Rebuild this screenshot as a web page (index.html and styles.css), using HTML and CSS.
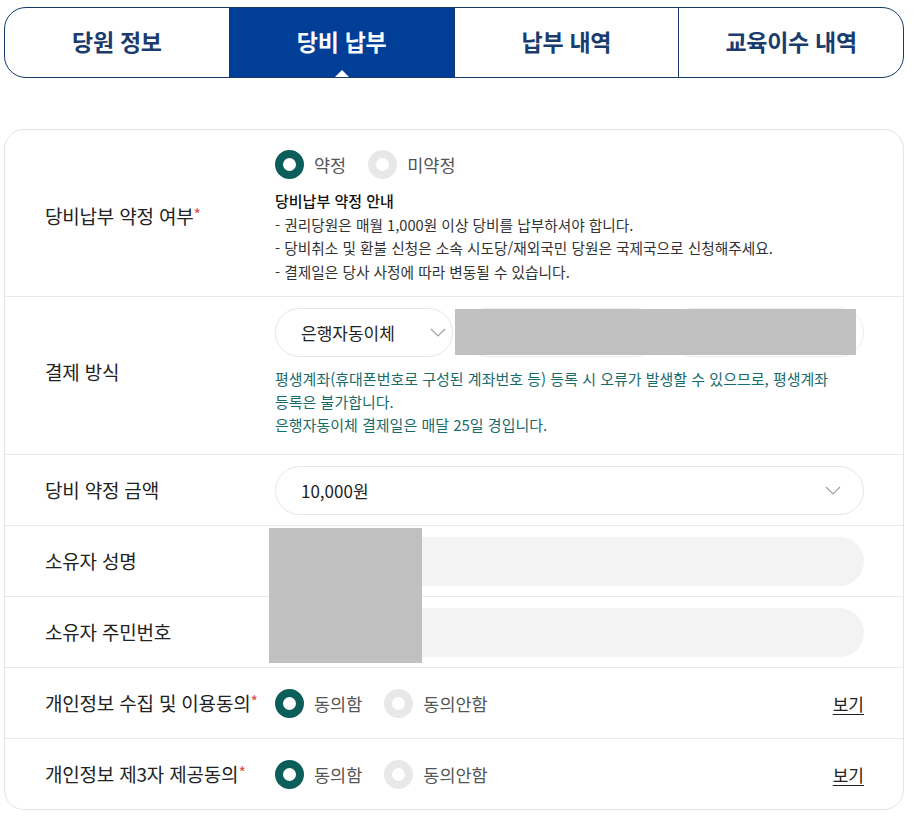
FILE: index.html
```html
<!DOCTYPE html>
<html lang="ko">
<head>
  <meta charset="UTF-8">
  <title>당비 납부</title>
  <link rel="stylesheet" href="styles.css">
</head>
<body>
  <ul class="tabs">
    <li class="tab">당원 정보</li>
    <li class="tab active">당비 납부</li>
    <li class="tab">납부 내역</li>
    <li class="tab">교육이수 내역</li>
  </ul>

  <div class="card">
    <div class="row row-agree">
      <div class="label">당비납부 약정 여부<span class="req">*</span></div>
      <div class="field">
        <div class="radios">
          <label class="radio on"><i></i>약정</label>
          <label class="radio"><i></i>미약정</label>
        </div>
        <div class="notice">
          <p class="notice-title">당비납부 약정 안내</p>
          <p>- 권리당원은 매월 1,000원 이상 당비를 납부하셔야 합니다.</p>
          <p>- 당비취소 및 환불 신청은 소속 시도당/재외국민 당원은 국제국으로 신청해주세요.</p>
          <p>- 결제일은 당사 사정에 따라 변동될 수 있습니다.</p>
        </div>
      </div>
    </div>

    <div class="row row-pay">
      <div class="label">결제 방식</div>
      <div class="field">
        <div class="inline">
          <div class="select select-sm">
            <span>은행자동이체</span>
            <svg width="16" height="9" viewBox="0 0 16 9"><path d="M1 1l7 7 7-7" fill="none" stroke="#a0a0a0" stroke-width="1.2"/></svg>
          </div>
          <div class="input outline"></div>
          <div class="input outline"></div>
        </div>
        <p class="note">평생계좌(휴대폰번호로 구성된 계좌번호 등) 등록 시 오류가 발생할 수 있으므로, 평생계좌<br>등록은 불가합니다.<br>은행자동이체 결제일은 매달 25일 경입니다.</p>
      </div>
    </div>

    <div class="row">
      <div class="label">당비 약정 금액</div>
      <div class="field">
        <div class="select">
          <span>10,000원</span>
          <svg width="16" height="9" viewBox="0 0 16 9"><path d="M1 1l7 7 7-7" fill="none" stroke="#a0a0a0" stroke-width="1.2"/></svg>
        </div>
      </div>
    </div>

    <div class="row">
      <div class="label">소유자 성명</div>
      <div class="field"><div class="input"></div></div>
    </div>

    <div class="row">
      <div class="label">소유자 주민번호</div>
      <div class="field"><div class="input"></div></div>
    </div>

    <div class="row">
      <div class="label">개인정보 수집 및 이용동의<span class="req">*</span></div>
      <div class="field split">
        <div class="radios">
          <label class="radio on"><i></i>동의함</label>
          <label class="radio"><i></i>동의안함</label>
        </div>
        <a class="view">보기</a>
      </div>
    </div>

    <div class="row">
      <div class="label">개인정보 제3자 제공동의<span class="req">*</span></div>
      <div class="field split">
        <div class="radios">
          <label class="radio on"><i></i>동의함</label>
          <label class="radio"><i></i>동의안함</label>
        </div>
        <a class="view">보기</a>
      </div>
    </div>

    <div class="mask mask-account"></div>
    <div class="mask mask-owner"></div>
  </div>
</body>
</html>
```
FILE: styles.css
```css
body {
  margin: 0;
  padding: 7px 11px 0 4px;
  background: #fff;
  font-family: "Noto Sans CJK KR", "Noto Sans", sans-serif;
  color: #222;
}
p {
  margin: 0;
}

/* tabs */
.tabs {
  display: flex;
  margin: 0;
  padding: 0;
  list-style: none;
  height: 71px;
  box-sizing: border-box;
  border: 1px solid #17396a;
  border-radius: 22px;
  overflow: hidden;
}
.tab {
  position: relative;
  flex: 1;
  display: flex;
  align-items: center;
  justify-content: center;
  padding-bottom: 3px;
  font-size: 23px;
  font-weight: bold;
  color: #1a3c6d;
  border-left: 1px solid #17396a;
  letter-spacing: -0.3px;
}
.tab:first-child {
  border-left: none;
}
.tab.active {
  background: #003e98;
  color: #fff;
}
.tab.active::after {
  content: "";
  position: absolute;
  bottom: 0;
  left: 50%;
  margin-left: -7px;
  border-left: 7px solid transparent;
  border-right: 7px solid transparent;
  border-bottom: 7px solid #fff;
}

/* form card */
.card {
  position: relative;
  margin-top: 51px;
  border: 1px solid #e4e4e4;
  border-radius: 20px;
}
.row {
  display: grid;
  grid-template-columns: 230px 1fr;
  align-items: center;
  min-height: 70px;
  padding: 0 39px 0 40px;
  border-top: 1px solid #e8e8e8;
}
.row:first-child {
  border-top: none;
}
.row-agree {
  padding-top: 20px;
  padding-bottom: 13px;
}
.row-pay {
  padding-top: 11px;
  padding-bottom: 18px;
}
.label {
  font-size: 19px;
  letter-spacing: -0.2px;
  white-space: nowrap;
  padding-bottom: 2px;
}
.req {
  color: #e04b4b;
  font-size: 16px;
  vertical-align: 3px;
}
.split {
  display: flex;
  align-items: center;
  justify-content: space-between;
}

/* radios */
.radios {
  display: flex;
  gap: 22px;
}
.radio {
  display: flex;
  align-items: center;
  gap: 10px;
  font-size: 17.5px;
  color: #555;
}
.radio i {
  width: 29px;
  height: 29px;
  box-sizing: border-box;
  border-radius: 50%;
  border: 8.5px solid #e8e8e8;
  background: #fff;
}
.radio.on i {
  border-color: #0c5e5a;
}

.notice {
  margin-top: 10px;
  font-size: 14.7px;
  line-height: 23.5px;
  color: #333;
}
.notice-title {
  font-size: 15px;
  font-weight: 500;
  color: #111;
}
.note {
  margin-top: 10px;
  font-size: 15px;
  line-height: 23px;
  color: #186b6b;
}

/* inputs */
.inline {
  display: flex;
  gap: 10px;
}
.select {
  display: flex;
  align-items: center;
  justify-content: space-between;
  height: 49px;
  box-sizing: border-box;
  padding: 0 22px 0 25px;
  border: 1px solid #e6e6e6;
  border-radius: 25px;
  font-size: 17px;
}
.select-sm {
  width: 178px;
  flex: none;
  padding-right: 6px;
}
.input {
  height: 49px;
  border-radius: 25px;
  background: #f3f3f3;
}
.input.outline {
  flex: 1;
  box-sizing: border-box;
  background: #fff;
  border: 1px solid #ececec;
}
.view {
  font-size: 17px;
  color: #222;
  text-decoration: underline;
  text-underline-offset: 3px;
}

/* masked personal data */
.mask {
  position: absolute;
  background: #c0c0c0;
}
.mask-account {
  left: 450px;
  top: 179px;
  width: 401px;
  height: 46px;
}
.mask-owner {
  left: 264px;
  top: 398px;
  width: 153px;
  height: 135px;
}
```
